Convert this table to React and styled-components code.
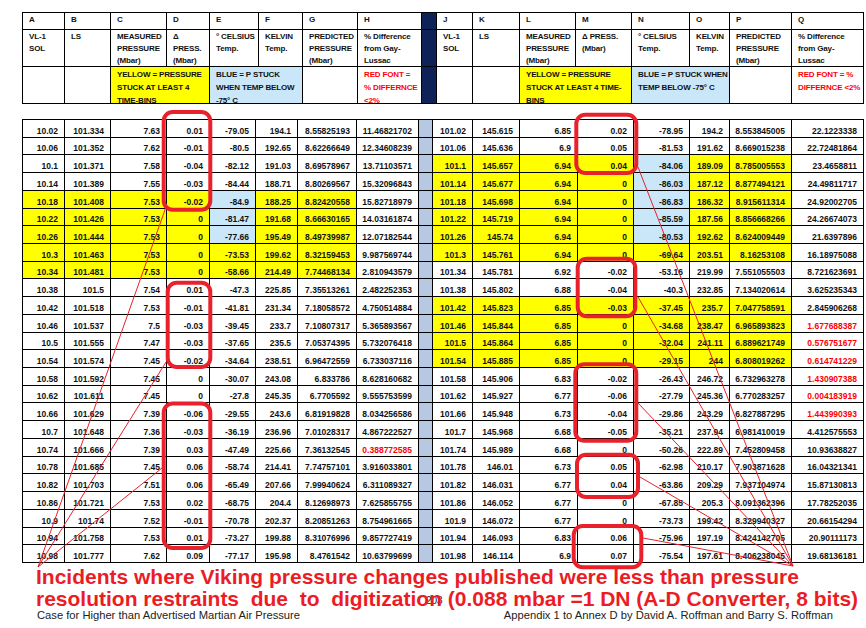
import React from 'react';
import styled, { createGlobalStyle } from 'styled-components';

const GlobalStyle = createGlobalStyle`
  html, body {
    margin: 0;
    padding: 0;
    background: #fff;
  }
  body {
    font-family: "Liberation Sans", Arial, sans-serif;
  }
`;

const fills = {
  y: '#ffff00',
  b: '#c9e7f8',
  n: '#0e2257',
  g: '#b7c9e2',
};

const Page = styled.div`
  position: relative;
  width: 866px;
  height: 628px;
  overflow: hidden;
  padding-top: 12px;
  box-sizing: border-box;
  background: #fff;
`;

const Sheet = styled.table`
  border-collapse: collapse;
  table-layout: fixed;
  width: 841px;
  margin-left: 22px;
  color: #111;
  font-weight: bold;
`;

const HeadSheet = styled(Sheet)`
  font-size: 8px;
  letter-spacing: -0.15px;
`;

const DataSheet = styled(Sheet)`
  margin-top: 15px;
  font-size: 8.5px;
`;

const Row = styled.tr`
  height: ${p => p.$h}px;
`;

const HeadCell = styled.td`
  border: 1px solid #000;
  vertical-align: top;
  padding: 1px 0 0 6px;
  white-space: nowrap;
  background: ${p => fills[p.$fill] || 'transparent'};
  color: ${p => (p.$red ? '#ff0000' : 'inherit')};
`;

const CellText = styled.div`
  line-height: ${p => p.$lh}px;
  height: ${p => p.$h}px;
  overflow: visible;
`;

const DataCell = styled.td`
  border: 1px solid #000;
  vertical-align: bottom;
  text-align: right;
  padding: 0 6px 1px 2px;
  line-height: 10px;
  white-space: nowrap;
  overflow: hidden;
  background: ${p => fills[p.$fill] || 'transparent'};
  color: ${p => (p.$red ? '#ff0000' : 'inherit')};
`;

const Overlay = styled.svg`
  position: absolute;
  left: 0;
  top: 0;
  z-index: 1;
  pointer-events: none;
`;

const Caption = styled.div`
  position: relative;
  z-index: 2;
  margin-top: 2.6px;
  padding-left: 36px;
  height: 43px;
  font-size: 21px;
  font-weight: bold;
  line-height: 22.7px;
  color: #ec1c24;
  white-space: pre;
`;

const Footer = styled.div`
  position: relative;
  display: flex;
  justify-content: space-between;
  padding: 0 33px 0 37px;
  font-size: 11.2px;
  line-height: 13px;
  color: #222;
`;

const PageNo = styled.span`
  position: absolute;
  left: 426px;
  top: -15px;
  font-size: 10px;
  color: #222;
`;

const headWidths = [42, 46, 56, 43, 49, 44, 55, 64, 15, 36, 47, 56, 56, 58, 40, 62, 72];
const dataWidths = [42, 46, 56, 43, 46, 42, 59, 62, 14, 40, 47, 58, 56, 56, 40, 62, 72];

const letters = 'ABCDEFGHIJKLMNOPQ'.split('');

const titles = [
  ['VL-1', 'SOL'],
  ['LS'],
  ['MEASURED', 'PRESSURE', '(Mbar)'],
  ['Δ', 'PRESS.', '(Mbar)'],
  ['° CELSIUS', 'Temp.'],
  ['KELVIN', 'Temp.'],
  ['PREDICTED', 'PRESSURE', '(Mbar)'],
  ['% Difference', 'from Gay-', 'Lussac'],
  null,
  ['VL-1', 'SOL'],
  ['LS'],
  ['MEASURED', 'PRESSURE', '(Mbar)'],
  ['Δ PRESS.', '(Mbar)'],
  ['° CELSIUS', 'Temp.'],
  ['KELVIN', 'Temp.'],
  ['PREDICTED', 'PRESSURE', '(Mbar)'],
  ['% Difference', 'from Gay-', 'Lussac'],
];

const legend = [
  { span: 1 },
  { span: 1 },
  { span: 2, fill: 'y', lines: ['YELLOW = PRESSURE', 'STUCK AT LEAST 4', 'TIME-BINS'] },
  { span: 2, fill: 'b', lines: ['BLUE = P STUCK', 'WHEN TEMP BELOW', '-75° C'] },
  { span: 1 },
  { span: 1, red: true, lines: ['RED FONT =', '% DIFFERNCE', '<2%'] },
  { span: 1, fill: 'n' },
  { span: 1 },
  { span: 1 },
  { span: 2, fill: 'y', lines: ['YELLOW = PRESSURE', 'STUCK AT LEAST 4 TIME-', 'BINS'] },
  { span: 2, fill: 'b', lines: ['BLUE = P STUCK WHEN', 'TEMP BELOW -75° C'] },
  { span: 1 },
  { span: 1, red: true, lines: ['RED FONT = %', 'DIFFERNCE <2%'] },
];

const W = '........';
const YB = 'yyyybyy.';
const YY = 'yyyyyyy.';

const rows = [
  { v: ['10.02', '101.334', '7.63', '0.01', '-79.05', '194.1', '8.55825193', '11.46821702', '101.02', '145.615', '6.85', '0.02', '-78.95', '194.2', '8.553845005', '22.1223338'], l: W, r: W },
  { v: ['10.06', '101.352', '7.62', '-0.01', '-80.5', '192.65', '8.62266649', '12.34608239', '101.06', '145.636', '6.9', '0.05', '-81.53', '191.62', '8.669015238', '22.72481864'], l: W, r: W },
  { v: ['10.1', '101.371', '7.58', '-0.04', '-82.12', '191.03', '8.69578967', '13.71103571', '101.1', '145.657', '6.94', '0.04', '-84.06', '189.09', '8.785005553', '23.4658811'], l: W, r: YB },
  { v: ['10.14', '101.389', '7.55', '-0.03', '-84.44', '188.71', '8.80269567', '15.32096843', '101.14', '145.677', '6.94', '0', '-86.03', '187.12', '8.877494121', '24.49811717'], l: W, r: YB },
  { v: ['10.18', '101.408', '7.53', '-0.02', '-84.9', '188.25', '8.82420558', '15.82718979', '101.18', '145.698', '6.94', '0', '-86.83', '186.32', '8.915611314', '24.92002705'], l: YB, r: YB },
  { v: ['10.22', '101.426', '7.53', '0', '-81.47', '191.68', '8.66630165', '14.03161874', '101.22', '145.719', '6.94', '0', '-85.59', '187.56', '8.856668266', '24.26674073'], l: YB, r: YB },
  { v: ['10.26', '101.444', '7.53', '0', '-77.66', '195.49', '8.49739987', '12.07182544', '101.26', '145.74', '6.94', '0', '-80.53', '192.62', '8.624009449', '21.6397896'], l: YB, r: YB },
  { v: ['10.3', '101.463', '7.53', '0', '-73.53', '199.62', '8.32159453', '9.987569744', '101.3', '145.761', '6.94', '0', '-69.64', '203.51', '8.16253108', '16.18975088'], l: YY, r: YY },
  { v: ['10.34', '101.481', '7.53', '0', '-58.66', '214.49', '7.74468134', '2.810943579', '101.34', '145.781', '6.92', '-0.02', '-53.16', '219.99', '7.551055503', '8.721623691'], l: YY, r: W },
  { v: ['10.38', '101.5', '7.54', '0.01', '-47.3', '225.85', '7.35513261', '2.482252353', '101.38', '145.802', '6.88', '-0.04', '-40.3', '232.85', '7.134020614', '3.625235343'], l: W, r: W },
  { v: ['10.42', '101.518', '7.53', '-0.01', '-41.81', '231.34', '7.18058572', '4.750514884', '101.42', '145.823', '6.85', '-0.03', '-37.45', '235.7', '7.047758591', '2.845906268'], l: W, r: YY },
  { v: ['10.46', '101.537', '7.5', '-0.03', '-39.45', '233.7', '7.10807317', '5.365893567', '101.46', '145.844', '6.85', '0', '-34.68', '238.47', '6.965893823', '1.677688387'], l: W, r: YY, rr: true },
  { v: ['10.5', '101.555', '7.47', '-0.03', '-37.65', '235.5', '7.05374395', '5.732076418', '101.5', '145.864', '6.85', '0', '-32.04', '241.11', '6.889621749', '0.576751677'], l: W, r: YY, rr: true },
  { v: ['10.54', '101.574', '7.45', '-0.02', '-34.64', '238.51', '6.96472559', '6.733037116', '101.54', '145.885', '6.85', '0', '-29.15', '244', '6.808019262', '0.614741229'], l: W, r: YY, rr: true },
  { v: ['10.58', '101.592', '7.45', '0', '-30.07', '243.08', '6.833786', '8.628160682', '101.58', '145.906', '6.83', '-0.02', '-26.43', '246.72', '6.732963278', '1.430907388'], l: W, r: W, rr: true },
  { v: ['10.62', '101.611', '7.45', '0', '-27.8', '245.35', '6.7705592', '9.555753599', '101.62', '145.927', '6.77', '-0.06', '-27.79', '245.36', '6.770283257', '0.004183919'], l: W, r: W, rr: true },
  { v: ['10.66', '101.629', '7.39', '-0.06', '-29.55', '243.6', '6.81919828', '8.034256586', '101.66', '145.948', '6.73', '-0.04', '-29.86', '243.29', '6.827887295', '1.443990393'], l: W, r: W, rr: true },
  { v: ['10.7', '101.648', '7.36', '-0.03', '-36.19', '236.96', '7.01028317', '4.867222527', '101.7', '145.968', '6.68', '-0.05', '-35.21', '237.94', '6.981410019', '4.412575553'], l: W, r: W },
  { v: ['10.74', '101.666', '7.39', '0.03', '-47.49', '225.66', '7.36132545', '0.388772585', '101.74', '145.989', '6.68', '0', '-50.26', '222.89', '7.452809458', '10.93638827'], l: W, r: W, lr: true },
  { v: ['10.78', '101.685', '7.45', '0.06', '-58.74', '214.41', '7.74757101', '3.916033801', '101.78', '146.01', '6.73', '0.05', '-62.98', '210.17', '7.903871628', '16.04321341'], l: W, r: W },
  { v: ['10.82', '101.703', '7.51', '0.06', '-65.49', '207.66', '7.99940624', '6.311089327', '101.82', '146.031', '6.77', '0.04', '-63.86', '209.29', '7.937104974', '15.87130813'], l: W, r: W },
  { v: ['10.86', '101.721', '7.53', '0.02', '-68.75', '204.4', '8.12698973', '7.625855755', '101.86', '146.052', '6.77', '0', '-67.85', '205.3', '8.091362396', '17.78252035'], l: W, r: W },
  { v: ['10.9', '101.74', '7.52', '-0.01', '-70.78', '202.37', '8.20851263', '8.754961665', '101.9', '146.072', '6.77', '0', '-73.73', '199.42', '8.329940327', '20.66154294'], l: W, r: W },
  { v: ['10.94', '101.758', '7.53', '0.01', '-73.27', '199.88', '8.31076996', '9.857727419', '101.94', '146.093', '6.83', '0.06', '-75.96', '197.19', '8.424142705', '20.90111173'], l: W, r: W },
  { v: ['10.98', '101.777', '7.62', '0.09', '-77.17', '195.98', '8.4761542', '10.63799699', '101.98', '146.114', '6.9', '0.07', '-75.54', '197.61', '8.406238045', '19.68136181'], l: W, r: W },
];

const boxes = [
  [163.7, 112, 46.6, 97.7],
  [167.7, 282.7, 42.6, 84.3],
  [163.7, 403.5, 46.6, 144.5],
  [576.3, 114.7, 60, 58.3],
  [577.7, 258.7, 57.6, 57.6],
  [575.3, 364.3, 61, 76.4],
  [577, 454.7, 61, 42.3],
  [573.7, 526, 67.6, 41.3],
];

const leftLines = [[166, 207], [166, 362], [162, 468]];
const rightLines = [[638, 167], [638, 297], [637, 402], [640, 477], [643, 538]];

function Lines({ lines }) {
  return lines.map((l, i) => (
    <React.Fragment key={i}>
      {l}
      {i < lines.length - 1 && <br />}
    </React.Fragment>
  ));
}

function HeaderTable() {
  return (
    <HeadSheet>
      <colgroup>
        {headWidths.map((w, i) => <col key={i} style={{ width: w }} />)}
      </colgroup>
      <tbody>
        <Row $h={16.7}>
          {letters.map(l => (
            <HeadCell key={l} $fill={l === 'I' ? 'n' : ''}>
              <CellText $lh={12} $h={12}>{l === 'I' ? '' : l}</CellText>
            </HeadCell>
          ))}
        </Row>
        <Row $h={37}>
          {titles.map((t, i) => (
            <HeadCell key={i} $fill={t ? '' : 'n'}>
              <CellText $lh={12} $h={33}>{t && <Lines lines={t} />}</CellText>
            </HeadCell>
          ))}
        </Row>
        <Row $h={37.3}>
          {legend.map((c, i) => (
            <HeadCell key={i} colSpan={c.span} $fill={c.fill} $red={c.red}>
              <CellText $lh={13} $h={33}>{c.lines && <Lines lines={c.lines} />}</CellText>
            </HeadCell>
          ))}
        </Row>
      </tbody>
    </HeadSheet>
  );
}

function DataTable() {
  return (
    <DataSheet>
      <colgroup>
        {dataWidths.map((w, i) => <col key={i} style={{ width: w }} />)}
      </colgroup>
      <tbody>
        {rows.map((row, ri) => (
          <Row key={ri} $h={17.72}>
            {row.v.slice(0, 8).map((v, i) => (
              <DataCell key={'l' + i} $fill={row.l[i]} $red={row.lr && i === 7}>{v}</DataCell>
            ))}
            <DataCell $fill="g" />
            {row.v.slice(8).map((v, i) => (
              <DataCell key={'r' + i} $fill={row.r[i]} $red={row.rr && i === 7}>{v}</DataCell>
            ))}
          </Row>
        ))}
      </tbody>
    </DataSheet>
  );
}

function Annotations() {
  return (
    <Overlay width="866" height="628" viewBox="0 0 866 628">
      {leftLines.map(([x, y], i) => (
        <line key={'ll' + i} x1={x} y1={y} x2={38} y2={567} stroke="#e8212b" strokeWidth="1" />
      ))}
      {rightLines.map(([x, y], i) => (
        <line key={'rl' + i} x1={x} y1={y} x2={793} y2={566} stroke="#e8212b" strokeWidth="1" />
      ))}
      {boxes.map(([x, y, w, h], i) => (
        <rect key={i} x={x} y={y} width={w} height={h} rx="9" ry="9" fill="none" stroke="#e8212b" strokeWidth="4" />
      ))}
    </Overlay>
  );
}

export default function App() {
  return (
    <>
      <GlobalStyle />
      <Page>
        <HeaderTable />
        <DataTable />
        <Caption>
          {'Incidents where Viking pressure changes published were less than pressure\nresolution restraints  due  to  digitization (0.088 mbar =1 DN (A-D Converter, 8 bits)'}
        </Caption>
        <Footer>
          <PageNo>203</PageNo>
          <span>Case for Higher than Advertised Martian Air Pressure</span>
          <span>Appendix 1 to Annex D by David A. Roffman and Barry S. Roffman</span>
        </Footer>
        <Annotations />
      </Page>
    </>
  );
}
